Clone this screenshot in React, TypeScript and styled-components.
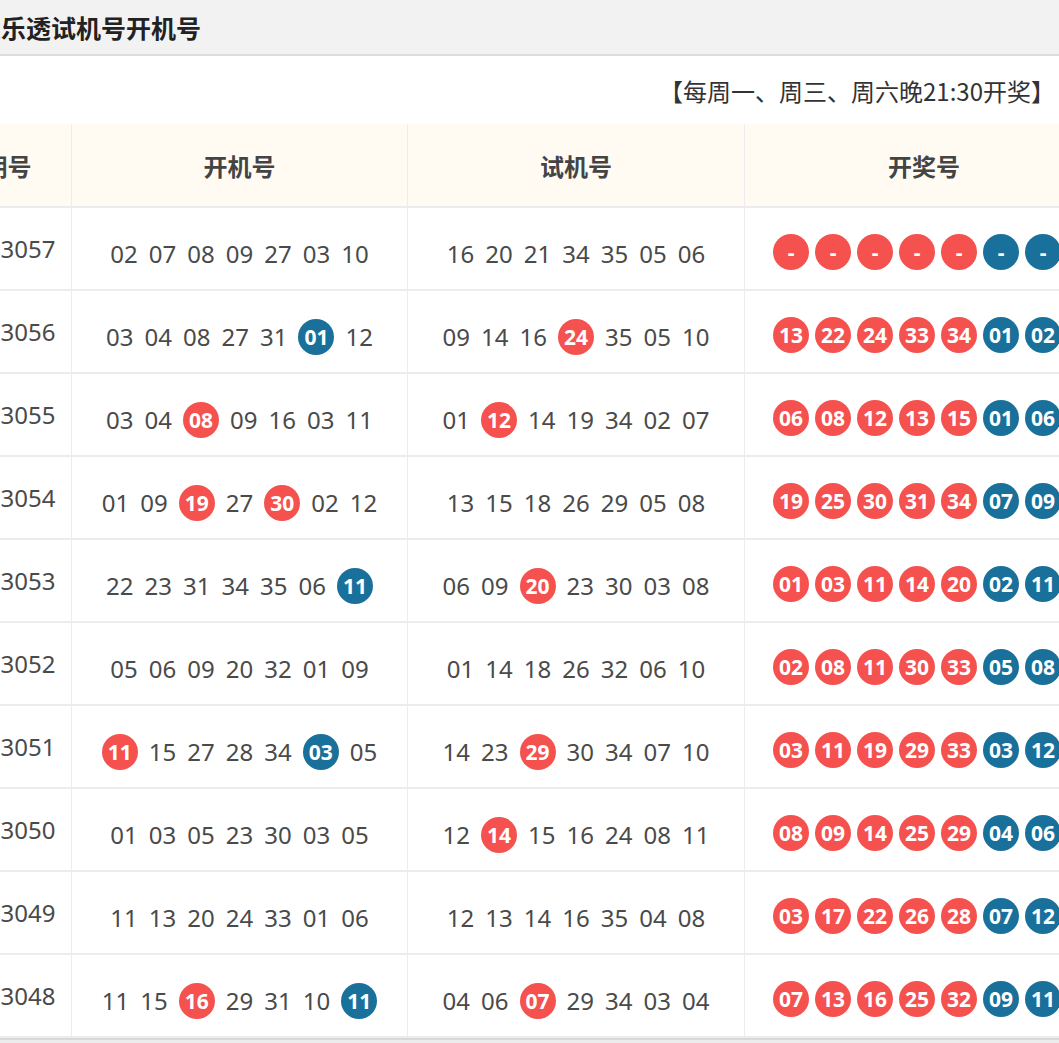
import React from "react";
import styled, { createGlobalStyle } from "styled-components";

const Global = createGlobalStyle`
  body { margin: 0; background: #fff; font-family: "Noto Sans", "Noto Sans CJK SC", sans-serif; overflow: hidden; }
`;

const Page = styled.div`
  width: 1059px;
  height: 1043px;
  overflow: hidden;
  position: relative;
  background: #fff;
`;

const TitleBar = styled.div`
  height: 56px;
  background: #f2f2f2;
  border-bottom: 2px solid #dcdcdc;
  display: flex;
  align-items: center;
  box-sizing: border-box;
`;

const Title = styled.h1`
  margin: 0 0 0 -24px;
  font-size: 25px;
  font-weight: 700;
  color: #222;
  font-family: "Noto Sans CJK SC", sans-serif;
`;

const Notice = styled.div`
  height: 68px;
  display: flex;
  align-items: center;
  justify-content: flex-end;
  padding-right: 4px;
  font-size: 24px;
  color: #333;
  font-family: "Noto Sans CJK SC", sans-serif;
`;

const Table = styled.div`
  margin-left: -56px;
  width: 1160px;
  display: grid;
  grid-template-columns: 128px 336px 337px 359px;
`;

const Head = styled.div`
  height: 84px;
  background: #fffbf3;
  border-right: 1px solid #ececec;
  border-bottom: 2px solid #ececec;
  box-sizing: border-box;
  display: flex;
  align-items: center;
  justify-content: center;
  font-size: 24px;
  font-weight: 700;
  color: #444;
  font-family: "Noto Sans CJK SC", sans-serif;
`;

const Cell = styled.div`
  height: 83px;
  border-right: 1px solid #ececec;
  border-bottom: 2px solid #ececec;
  box-sizing: border-box;
  display: flex;
  align-items: center;
  justify-content: center;
  padding-top: 10px;
  gap: 11px;
  font-size: 24px;
  color: #4a4a4a;
`;

const Period = styled(Cell)`
  align-items: flex-start;
  padding-top: 24px;
`;

const Ball = styled.span<{ $c: string }>`
  width: 36px;
  height: 36px;
  border-radius: 50%;
  background: ${(p) => p.$c};
  color: #fff;
  font-weight: 700;
  font-size: 21px;
  display: inline-flex;
  align-items: center;
  justify-content: center;
  flex-shrink: 0;
`;

const Balls = styled(Cell)`
  gap: 6px;
  padding-left: 28px;
  padding-top: 6px;
  justify-content: flex-start;
`;

const BottomBar = styled.div`
  height: 8px;
  background: #ececec;
  border-top: 2px solid #d8d8d8;
`;

const RED = "#f5514f";
const BLUE = "#19709b";

type Row = { p: string; k: string[]; kr: number[]; kb: number[]; s: string[]; sr: number[]; d: string[] };
const sp = (s: string) => s.split(" ");

const rows: Row[] = [
  { p: "2023057", k: sp("02 07 08 09 27 03 10"), kr: [], kb: [], s: sp("16 20 21 34 35 05 06"), sr: [], d: ["-", "-", "-", "-", "-", "-", "-"] },
  { p: "2023056", k: sp("03 04 08 27 31 01 12"), kr: [], kb: [5], s: sp("09 14 16 24 35 05 10"), sr: [3], d: sp("13 22 24 33 34 01 02") },
  { p: "2023055", k: sp("03 04 08 09 16 03 11"), kr: [2], kb: [], s: sp("01 12 14 19 34 02 07"), sr: [1], d: sp("06 08 12 13 15 01 06") },
  { p: "2023054", k: sp("01 09 19 27 30 02 12"), kr: [2, 4], kb: [], s: sp("13 15 18 26 29 05 08"), sr: [], d: sp("19 25 30 31 34 07 09") },
  { p: "2023053", k: sp("22 23 31 34 35 06 11"), kr: [], kb: [6], s: sp("06 09 20 23 30 03 08"), sr: [2], d: sp("01 03 11 14 20 02 11") },
  { p: "2023052", k: sp("05 06 09 20 32 01 09"), kr: [], kb: [], s: sp("01 14 18 26 32 06 10"), sr: [], d: sp("02 08 11 30 33 05 08") },
  { p: "2023051", k: sp("11 15 27 28 34 03 05"), kr: [0], kb: [5], s: sp("14 23 29 30 34 07 10"), sr: [2], d: sp("03 11 19 29 33 03 12") },
  { p: "2023050", k: sp("01 03 05 23 30 03 05"), kr: [], kb: [], s: sp("12 14 15 16 24 08 11"), sr: [1], d: sp("08 09 14 25 29 04 06") },
  { p: "2023049", k: sp("11 13 20 24 33 01 06"), kr: [], kb: [], s: sp("12 13 14 16 35 04 08"), sr: [], d: sp("03 17 22 26 28 07 12") },
  { p: "2023048", k: sp("11 15 16 29 31 10 11"), kr: [2], kb: [6], s: sp("04 06 07 29 34 03 04"), sr: [2], d: sp("07 13 16 25 32 09 11") },
];

const Nums = ({ n, r, b }: { n: string[]; r: number[]; b: number[] }) => (
  <Cell>
    {n.map((x, i) =>
      r.includes(i) ? <Ball key={i} $c={RED}>{x}</Ball> : b.includes(i) ? <Ball key={i} $c={BLUE}>{x}</Ball> : <span key={i}>{x}</span>
    )}
  </Cell>
);

export default function App() {
  return (
    <Page>
      <Global />
      <TitleBar>
        <Title>大乐透试机号开机号</Title>
      </TitleBar>
      <Notice>【每周一、周三、周六晚21:30开奖】</Notice>
      <Table>
        <Head>期号</Head>
        <Head>开机号</Head>
        <Head>试机号</Head>
        <Head>开奖号</Head>
        {rows.map((r) => (
          <React.Fragment key={r.p}>
            <Period>{r.p}</Period>
            <Nums n={r.k} r={r.kr} b={r.kb} />
            <Nums n={r.s} r={r.sr} b={[]} />
            <Balls>
              {r.d.map((x, i) => (
                <Ball key={i} $c={i < 5 ? RED : BLUE}>{x}</Ball>
              ))}
            </Balls>
          </React.Fragment>
        ))}
      </Table>
      <BottomBar />
    </Page>
  );
}
